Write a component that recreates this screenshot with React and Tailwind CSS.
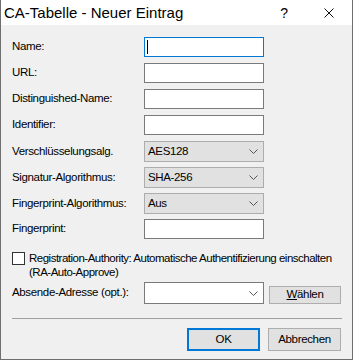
const font = { fontFamily: '"Liberation Sans", Arial, sans-serif' };

const Chevron = () => (
  <svg width="9" height="5" viewBox="0 0 9 5" className="shrink-0">
    <path d="M0.5 0.5 L4.5 4.5 L8.5 0.5" fill="none" stroke="#555" strokeWidth="1" />
  </svg>
);

const TextField = ({ focused }) => (
  <div
    className={
      'w-[120px] h-[20px] bg-white border flex items-center ' +
      (focused ? 'border-[#0078d7]' : 'border-[#7a7a7a]')
    }
  >
    {focused && <div className="ml-[2px] w-px h-[14px] bg-black" />}
  </div>
);

const Select = ({ value }) => (
  <div className="w-[120px] h-[21px] bg-[#e1e1e1] border border-[#adadad] flex items-center justify-between pl-[3px] pr-[5px]">
    <span>{value}</span>
    <Chevron />
  </div>
);

const Row = ({ label, children, className = '' }) => (
  <div className={'flex items-center ' + className}>
    <span className="w-[132px] shrink-0">{label}</span>
    {children}
  </div>
);

const App = () => {
  return (
    <div
      className="w-[353px] h-[360px] flex flex-col border-x border-b border-[#6e6e6e] bg-[#f0f0f0] text-[11.5px] tracking-[-0.35px] text-black overflow-hidden"
      style={font}
    >
      {/* Title bar */}
      <div className="h-[25px] bg-white flex items-center shrink-0 tracking-normal">
        <span className="ml-[3px] text-[15px] leading-none">CA-Tabelle - Neuer Eintrag</span>
        <span className="ml-auto mr-[36px] text-[14px] leading-none">?</span>
        <svg width="10" height="10" viewBox="0 0 10 10" className="mr-[18px]">
          <path d="M0.5 0.5 L9.5 9.5 M9.5 0.5 L0.5 9.5" stroke="#111" strokeWidth="1" />
        </svg>
      </div>

      {/* Form */}
      <div className="flex flex-col pl-[11px] pr-[11px] pt-[12px]">
        <Row label="Name:" className="mb-[6px]"><TextField focused /></Row>
        <Row label="URL:" className="mb-[6px]"><TextField /></Row>
        <Row label="Distinguished-Name:" className="mb-[6px]"><TextField /></Row>
        <Row label="Identifier:" className="mb-[6px]"><TextField /></Row>
        <Row label="Verschlüsselungsalg." className="mb-[5px]"><Select value="AES128" /></Row>
        <Row label="Signatur-Algorithmus:" className="mb-[5px]"><Select value="SHA-256" /></Row>
        <Row label="Fingerprint-Algorithmus:" className="mb-[5px]"><Select value="Aus" /></Row>
        <Row label="Fingerprint:"><TextField /></Row>

        {/* Checkbox */}
        <div className="flex items-start mt-[12px]">
          <div className="w-[13px] h-[13px] border border-[#333] bg-white shrink-0 mt-[1px]" />
          <span className="ml-[4px] leading-[14px] whitespace-nowrap tracking-[-0.5px]">
            Registration-Authority: Automatische Authentifizierung einschalten
            <br />
            (RA-Auto-Approve)
          </span>
        </div>

        {/* Absende-Adresse */}
        <div className="flex items-center mt-[3px] h-[22px]">
          <span className="w-[132px] shrink-0">Absende-Adresse (opt.):</span>
          <div className="w-[120px] h-[22px] bg-white border border-[#7a7a7a] flex items-center justify-end pr-[5px]">
            <Chevron />
          </div>
          <button className="ml-[5px] w-[72px] h-[18px] mt-[3px] bg-[#e1e1e1] border border-[#adadad] flex items-center justify-center">
            <span><u>W</u>ählen</span>
          </button>
        </div>

        {/* Separator */}
        <div className="mt-[14px] h-px bg-[#a0a0a0] w-[330px]" />

        {/* Buttons */}
        <div className="flex justify-end gap-[8px] mt-[9px]">
          <button className="w-[73px] h-[23px] bg-[#e1e1e1] border-2 border-[#0078d7] flex items-center justify-center">
            OK
          </button>
          <button className="w-[73px] h-[23px] bg-[#e1e1e1] border border-[#adadad] flex items-center justify-center">
            Abbrechen
          </button>
        </div>
      </div>
    </div>
  );
};

export default App;
